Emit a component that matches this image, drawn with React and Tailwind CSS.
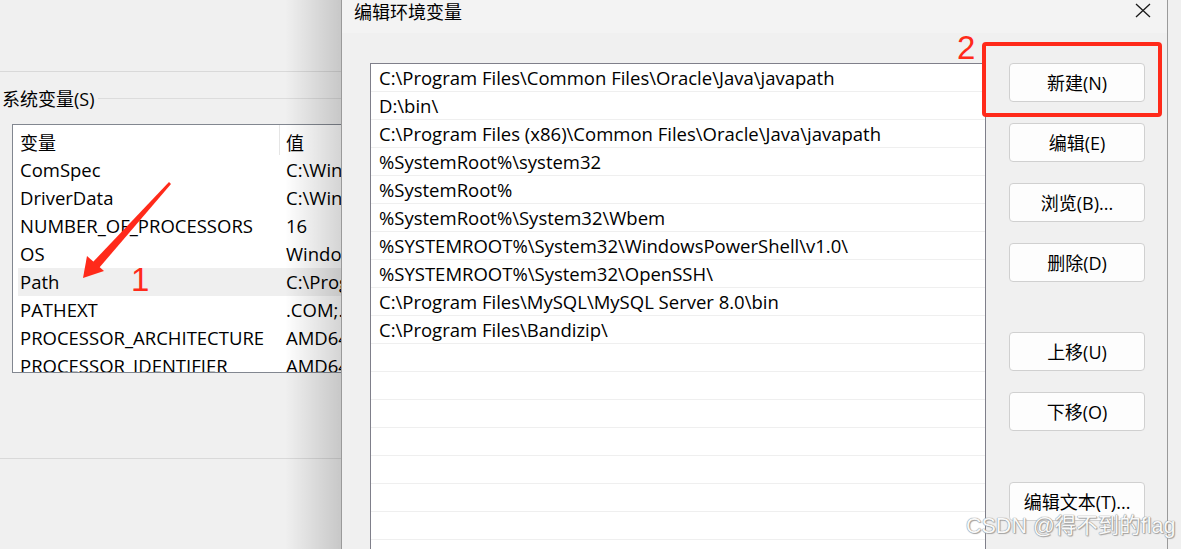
import React from "react";

const FONT = { fontFamily: '"Open Sans", "Noto Sans CJK SC", sans-serif' };

const sysRows = [
  ["ComSpec", "C:\\Windows\\system32\\cmd.exe"],
  ["DriverData", "C:\\Windows\\System32\\Drivers\\DriverData"],
  ["NUMBER_OF_PROCESSORS", "16"],
  ["OS", "Windows_NT"],
  ["Path", "C:\\Program Files\\Common Files"],
  ["PATHEXT", ".COM;.EXE;.BAT"],
  ["PROCESSOR_ARCHITECTURE", "AMD64"],
  ["PROCESSOR_IDENTIFIER", "AMD64 Family 25"],
];

const paths = [
  "C:\\Program Files\\Common Files\\Oracle\\Java\\javapath",
  "D:\\bin\\",
  "C:\\Program Files (x86)\\Common Files\\Oracle\\Java\\javapath",
  "%SystemRoot%\\system32",
  "%SystemRoot%",
  "%SystemRoot%\\System32\\Wbem",
  "%SYSTEMROOT%\\System32\\WindowsPowerShell\\v1.0\\",
  "%SYSTEMROOT%\\System32\\OpenSSH\\",
  "C:\\Program Files\\MySQL\\MySQL Server 8.0\\bin",
  "C:\\Program Files\\Bandizip\\",
  "", "", "", "", "", "", "", "",
];

function Btn({ children, className = "" }) {
  return (
    <div
      className={
        "w-[136px] h-[39px] shrink-0 rounded-[4px] border border-[#d0d0d0] bg-[#fdfdfd] flex items-center justify-center text-[18px] leading-none text-black pt-[1px] " +
        className
      }
    >
      {children}
    </div>
  );
}

export default function App() {
  return (
    <div
      className="relative w-[1181px] h-[549px] overflow-hidden bg-[#f0f0f0] flex text-black"
      style={FONT}
    >
      {/* Left: system variables window */}
      <div className="relative w-[341px] shrink-0 h-full overflow-hidden flex flex-col">
        <div className="h-[72px] shrink-0 border-b border-[#d9d9d9]" />
        <div className="h-[52px] shrink-0 flex items-center pl-[2px] pt-[1px]">
          <span className="text-[18px] leading-none whitespace-nowrap">系统变量(S)</span>
          <div className="flex-1 h-px bg-[#dcdcdc] ml-[3px]" />
        </div>
        <div className="ml-[12px] h-[249px] shrink-0 border border-[#828790] border-r-0 bg-white overflow-hidden">
          <div className="h-[31px] flex items-center text-[18px] leading-none">
            <div className="w-[266px] pl-[7px] pt-[4px] shrink-0">变量</div>
            <div className="w-px h-[30px] bg-[#e5e5e5] self-start" />
            <div className="pl-[6px] pt-[4px] whitespace-nowrap">值</div>
          </div>
          {sysRows.map(([k, v]) => (
            <div
              key={k}
              className={
                "h-[28px] ml-[5px] flex items-center text-[18.5px] leading-none whitespace-nowrap pt-[1px] " +
                (k === "Path" ? "bg-[#efefef]" : "")
              }
            >
              <div className="w-[268px] pl-[2px] shrink-0">{k}</div>
              <div>{v}</div>
            </div>
          ))}
        </div>
        <div className="h-[86px] shrink-0 border-b border-[#d9d9d9]" />
        {/* shadow from dialog */}
        <div className="absolute top-0 right-0 w-[56px] h-full bg-gradient-to-r from-[rgba(0,0,0,0)] to-[rgba(0,0,0,0.17)]" />
      </div>

      {/* Dialog */}
      <div className="w-[827px] shrink-0 h-full border-l border-r border-[#9a9a9a] bg-[#f0f0f0] flex flex-col">
        <div className="h-[33px] shrink-0 bg-[#f3f3f3] flex items-start justify-between pl-[12px] pr-[16px]">
          <span className="text-[18px] leading-none pt-[3px]">编辑环境变量</span>
          <svg width="16" height="15" viewBox="0 0 16 15" className="mt-[3px]">
            <path d="M1 1 L15 14 M15 1 L1 14" stroke="#1a1a1a" strokeWidth="1.3" fill="none" />
          </svg>
        </div>
        <div className="flex pt-[30px] pl-[28px]">
          <div className="w-[616px] h-[500px] shrink-0 border border-[#7f7f8a] border-b-0 bg-white overflow-hidden">
            {paths.map((p, i) => (
              <div
                key={i}
                className="h-[28px] border-b border-[#efefef] flex items-center pl-[8px] text-[18.5px] leading-none whitespace-nowrap pt-[1px]"
              >
                {p}
              </div>
            ))}
          </div>
          <div className="ml-[23px] flex flex-col gap-[21px]">
            <Btn>新建(N)</Btn>
            <Btn>编辑(E)</Btn>
            <Btn>浏览(B)...</Btn>
            <Btn>删除(D)</Btn>
            <Btn className="mt-[29px]">上移(U)</Btn>
            <Btn>下移(O)</Btn>
            <Btn className="mt-[30px]">编辑文本(T)...</Btn>
          </div>
        </div>
      </div>

      {/* right strip */}
      <div className="flex-1 h-full bg-[#f0f0f0]" />

      {/* annotations */}
      <svg className="absolute left-0 top-0" width="1181" height="549" viewBox="0 0 1181 549">
        <polygon points="169,182 171,184 99,268 93,262" fill="#ff2a1a" />
        <polygon points="83,278 87,256 104,271" fill="#ff2a1a" />
      </svg>
      <div
        className="absolute left-[131px] top-[263px] text-[33px] leading-none text-[#ff2a1a]"
        style={{ fontFamily: '"Liberation Sans", sans-serif' }}
      >
        1
      </div>
      <div
        className="absolute left-[957px] top-[31px] text-[33px] leading-none text-[#ff2a1a]"
        style={{ fontFamily: '"Liberation Sans", sans-serif' }}
      >
        2
      </div>
      <div className="absolute left-[982px] top-[42px] w-[180px] h-[75px] border-[4px] border-[#ff2a1a] rounded-[4px]" />
      <div
        className="absolute left-[966px] top-[516px] text-[21.5px] leading-none text-[#f8f8f8] whitespace-nowrap [text-shadow:0_0_1px_#888,0_0_1px_#888,1px_1px_1px_#aaa]"
        style={{ fontFamily: '"Liberation Sans", "Noto Sans CJK SC", sans-serif' }}
      >
        CSDN @得不到的flag
      </div>
    </div>
  );
}
